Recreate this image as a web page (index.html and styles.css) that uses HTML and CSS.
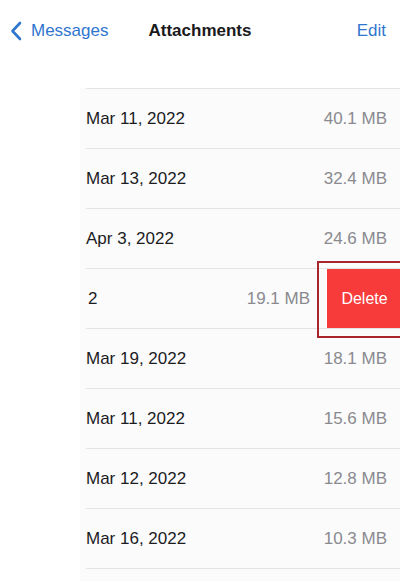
FILE: index.html
```html
<!DOCTYPE html>
<html lang="en">
<head>
<meta charset="utf-8">
<title>Attachments</title>
<link rel="stylesheet" href="styles.css">
</head>
<body>
<div class="screen">
  <header class="nav">
    <a class="back" href="#">
      <svg class="chev" width="12" height="20" viewBox="0 0 12 20"><path d="M10 2 L2.5 10 L10 18" fill="none" stroke="currentColor" stroke-width="2.6" stroke-linecap="round" stroke-linejoin="round"/></svg>
      <span>Messages</span>
    </a>
    <h1 class="title">Attachments</h1>
    <a class="edit" href="#">Edit</a>
  </header>
  <main class="body">
    <div class="gutter"></div>
    <ul class="list">
      <li class="row"><span class="date">Mar 11, 2022</span><span class="size">40.1 MB</span></li>
      <li class="row"><span class="date">Mar 13, 2022</span><span class="size">32.4 MB</span></li>
      <li class="row"><span class="date">Apr 3, 2022</span><span class="size">24.6 MB</span></li>
      <li class="row swiped">
        <span class="date partial">2</span>
        <span class="size">19.1 MB</span>
        <button class="delete">Delete</button>
        <span class="highlight"></span>
      </li>
      <li class="row"><span class="date">Mar 19, 2022</span><span class="size">18.1 MB</span></li>
      <li class="row"><span class="date">Mar 11, 2022</span><span class="size">15.6 MB</span></li>
      <li class="row"><span class="date">Mar 12, 2022</span><span class="size">12.8 MB</span></li>
      <li class="row"><span class="date">Mar 16, 2022</span><span class="size">10.3 MB</span></li>
    </ul>
  </main>
</div>
</body>
</html>
```
FILE: styles.css
```css
* { box-sizing: border-box; }
html, body { margin: 0; padding: 0; }
body {
  width: 400px;
  height: 581px;
  overflow: hidden;
  background: #ffffff;
  font-family: "Liberation Sans", Arial, sans-serif;
  -webkit-font-smoothing: antialiased;
}
.screen { display: flex; flex-direction: column; height: 581px; }

.nav {
  height: 88px;
  display: grid;
  grid-template-columns: 1fr auto 1fr;
  align-items: start;
  padding: 21px 14px 0 10px;
  background: #ffffff;
}
.back {
  display: flex;
  align-items: center;
  gap: 9px;
  color: #2f76cf;
  text-decoration: none;
  font-size: 17px;
  line-height: 20px;
}
.chev { display: block; }
.title {
  margin: 0;
  font-size: 17px;
  line-height: 20px;
  font-weight: 700;
  color: #1a1a1c;
  padding-left: 4px;
}
.edit {
  justify-self: end;
  color: #2f76cf;
  text-decoration: none;
  font-size: 17px;
  line-height: 20px;
}

.body { display: flex; flex: 1; min-height: 0; }
.gutter { width: 80px; background: #ffffff; flex: none; }
.list {
  flex: 1;
  margin: 0;
  padding: 0 0 0 6px;
  list-style: none;
  background: #fbfbfc;
  position: relative;
}
.list::before {
  content: "";
  display: block;
  height: 1px;
  background: #e3e3e6;
}
.row {
  position: relative;
  height: 60px;
  display: flex;
  align-items: center;
  border-bottom: 1px solid #e3e3e6;
  padding-right: 13px;
  padding-top: 1px;
  font-size: 17px;
}
.date { color: #1c1c1e; flex: 1; }
.date.partial { padding-left: 2px; }
.size { color: #8a8a8e; }

.swiped { padding-right: 0; padding-top: 0; }
.swiped .date, .swiped .size { padding-top: 1px; }
.swiped .size { margin-right: 17px; }
.delete {
  align-self: stretch;
  width: 73px;
  margin: 0;
  border: 0;
  background: #f73a3a;
  color: #ffffff;
  font-family: inherit;
  font-size: 16px;
  padding: 0 0 0 2px;
}
.highlight {
  position: absolute;
  left: 231px;
  top: -8px;
  width: 90px;
  height: 77px;
  border: 2px solid #a8262b;
  pointer-events: none;
}
```
